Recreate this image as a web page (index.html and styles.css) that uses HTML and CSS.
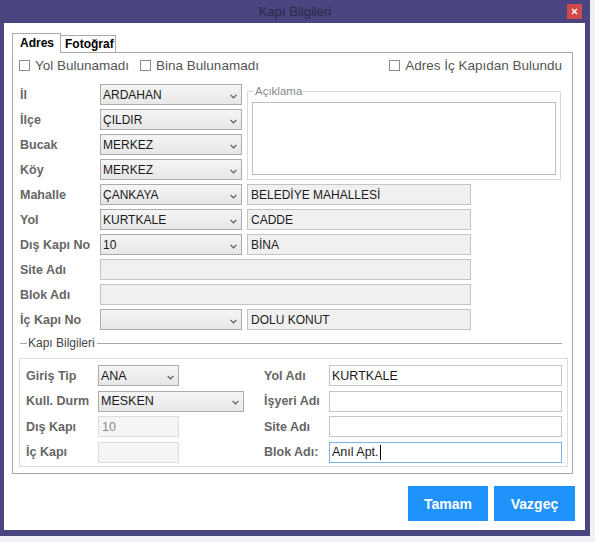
FILE: index.html
```html
<!DOCTYPE html>
<html lang="tr">
<head>
<meta charset="utf-8">
<title>Kapı Bilgileri</title>
<link rel="stylesheet" href="styles.css">
</head>
<body>
<div class="window">
  <div class="titlebar">
    <span></span>
    <span class="title">Kapı Bilgileri</span>
    <span class="close"><svg width="7" height="7" viewBox="0 0 7 7"><path d="M1 1 L6 6 M6 1 L1 6" stroke="#fff" stroke-width="1.4"/></svg></span>
  </div>
  <div class="client">
    <div class="tabs">
      <div class="tab active">Adres</div>
      <div class="tab other">Fotoğraf</div>
    </div>
    <div class="panel">
      <div class="checks">
        <div class="check"><span class="box"></span>Yol Bulunamadı</div>
        <div class="check"><span class="box"></span>Bina Bulunamadı</div>
        <div class="check push"><span class="box"></span>Adres İç Kapıdan Bulundu</div>
      </div>
      <div class="addr">
        <fieldset class="aciklama"><legend>Açıklama</legend><div class="memo"></div></fieldset>
        <div class="lbl">İl</div>
        <div class="combo"><span>ARDAHAN</span><svg class="chev" width="7" height="5" viewBox="0 0 7 5"><path d="M0.6 0.8 L3.5 3.8 L6.4 0.8" fill="none" stroke="#555" stroke-width="1.2"/></svg></div>
        <div class="lbl">İlçe</div>
        <div class="combo"><span>ÇILDIR</span><svg class="chev" width="7" height="5" viewBox="0 0 7 5"><path d="M0.6 0.8 L3.5 3.8 L6.4 0.8" fill="none" stroke="#555" stroke-width="1.2"/></svg></div>
        <div class="lbl">Bucak</div>
        <div class="combo"><span>MERKEZ</span><svg class="chev" width="7" height="5" viewBox="0 0 7 5"><path d="M0.6 0.8 L3.5 3.8 L6.4 0.8" fill="none" stroke="#555" stroke-width="1.2"/></svg></div>
        <div class="lbl">Köy</div>
        <div class="combo"><span>MERKEZ</span><svg class="chev" width="7" height="5" viewBox="0 0 7 5"><path d="M0.6 0.8 L3.5 3.8 L6.4 0.8" fill="none" stroke="#555" stroke-width="1.2"/></svg></div>
        <div class="lbl">Mahalle</div>
        <div class="combo"><span>ÇANKAYA</span><svg class="chev" width="7" height="5" viewBox="0 0 7 5"><path d="M0.6 0.8 L3.5 3.8 L6.4 0.8" fill="none" stroke="#555" stroke-width="1.2"/></svg></div>
        <div class="tb">BELEDİYE MAHALLESİ</div>
        <div class="lbl">Yol</div>
        <div class="combo"><span>KURTKALE</span><svg class="chev" width="7" height="5" viewBox="0 0 7 5"><path d="M0.6 0.8 L3.5 3.8 L6.4 0.8" fill="none" stroke="#555" stroke-width="1.2"/></svg></div>
        <div class="tb">CADDE</div>
        <div class="lbl">Dış Kapı No</div>
        <div class="combo"><span>10</span><svg class="chev" width="7" height="5" viewBox="0 0 7 5"><path d="M0.6 0.8 L3.5 3.8 L6.4 0.8" fill="none" stroke="#555" stroke-width="1.2"/></svg></div>
        <div class="tb">BİNA</div>
        <div class="lbl">Site Adı</div>
        <div class="tb wide"></div>
        <div class="lbl">Blok Adı</div>
        <div class="tb wide"></div>
        <div class="lbl">İç Kapı No</div>
        <div class="combo"><span></span><svg class="chev" width="7" height="5" viewBox="0 0 7 5"><path d="M0.6 0.8 L3.5 3.8 L6.4 0.8" fill="none" stroke="#555" stroke-width="1.2"/></svg></div>
        <div class="tb">DOLU KONUT</div>
      </div>
      <div class="sep">Kapı Bilgileri</div>
      <div class="kapi">
        <div class="klbl c1">Giriş Tip</div>
        <div class="combo kcombo small"><span>ANA</span><svg class="chev" width="7" height="5" viewBox="0 0 7 5"><path d="M0.6 0.8 L3.5 3.8 L6.4 0.8" fill="none" stroke="#555" stroke-width="1.2"/></svg></div>
        <div class="klbl c4">Yol Adı</div>
        <div class="kt">KURTKALE</div>
        <div class="klbl c1">Kull. Durm</div>
        <div class="combo kcombo"><span>MESKEN</span><svg class="chev" width="7" height="5" viewBox="0 0 7 5"><path d="M0.6 0.8 L3.5 3.8 L6.4 0.8" fill="none" stroke="#555" stroke-width="1.2"/></svg></div>
        <div class="klbl c4">İşyeri Adı</div>
        <div class="kt"></div>
        <div class="klbl c1">Dış Kapı</div>
        <div class="kd">10</div>
        <div class="klbl c4">Site Adı</div>
        <div class="kt"></div>
        <div class="klbl c1">İç Kapı</div>
        <div class="kd"></div>
        <div class="klbl c4">Blok Adı:</div>
        <div class="kt focus">Anıl Apt.<span class="caret"></span></div>
      </div>
    </div>
    <div class="actions">
      <div class="btn">Tamam</div>
      <div class="btn wide">Vazgeç</div>
    </div>
  </div>
</div>
</body>
</html>
```
FILE: styles.css
```css
* { box-sizing: border-box; }

body {
  margin: 0;
  background: #f1f0f5;
  font-family: "Liberation Sans", Arial, sans-serif;
}

.window {
  width: 590px;
  height: 536px;
  background: #4a4480;
  display: flex;
  flex-direction: column;
}

.titlebar {
  height: 23px;
  flex: none;
  display: grid;
  grid-template-columns: 1fr auto 1fr;
  align-items: center;
}

.title {
  font-size: 13px;
  color: #2c2a44;
}

.close {
  justify-self: end;
  margin-right: 8px;
  width: 15px;
  height: 15px;
  background: #cf4b4b;
  display: flex;
  align-items: center;
  justify-content: center;
}

.client {
  flex: 1;
  margin: 0 5px 6px 4px;
  background: #fff;
  padding: 10px 12px 0 8px;
  display: flex;
  flex-direction: column;
}

.tabs {
  display: flex;
  align-items: flex-end;
  height: 20px;
  margin-bottom: -1px;
  position: relative;
  z-index: 1;
}

.tab {
  font-size: 12px;
  font-weight: bold;
  color: #000;
  border: 1px solid #aaa;
  border-bottom: none;
  background: #fff;
}

.tab.active {
  height: 20px;
  line-height: 19px;
  padding: 0 6px 0 7px;
}

.tab.other {
  height: 17px;
  line-height: 16px;
  margin-bottom: 1px;
  border-left: none;
  padding: 0 1px 0 4px;
}

.panel {
  border: 1px solid #a8a8a8;
  height: 422px;
  display: flex;
  flex-direction: column;
  padding-top: 1px;
}

.checks {
  height: 22px;
  display: flex;
  align-items: center;
  padding: 0 10px 0 6px;
}

.check {
  display: flex;
  align-items: center;
  gap: 5px;
  font-size: 13.5px;
  color: #555;
  margin-right: 11px;
}

.check.push {
  margin-left: auto;
  margin-right: 0;
}

.box {
  width: 11px;
  height: 11px;
  border: 1px solid #8c8c8c;
  background: #fff;
}

.addr {
  margin-top: 8px;
  padding-left: 7px;
  display: grid;
  grid-template-columns: 80px 147px 224px 90px;
  grid-auto-rows: 21px;
  row-gap: 4px;
}

.lbl {
  grid-column: 1;
  align-self: center;
  font-size: 12.5px;
  font-weight: bold;
  color: #666;
}

.combo {
  grid-column: 2;
  width: 142px;
  border: 1px solid #acacac;
  background: linear-gradient(#f5f5f5, #e7e7e7);
  display: flex;
  align-items: center;
  justify-content: space-between;
  padding: 0 4px 0 2px;
  font-size: 12px;
  color: #1a1a1a;
}

.chev {
  margin-top: 3px;
}

.tb {
  grid-column: 3;
  border: 1px solid #c4c4c4;
  background: #f0f0f0;
  display: flex;
  align-items: center;
  padding-left: 3px;
  font-size: 12px;
  color: #1a1a1a;
}

.tb.wide {
  grid-column: 2 / 4;
}

.aciklama {
  grid-column: 3 / 5;
  grid-row: 1 / 5;
  margin: 0;
  min-width: 0;
  padding: 0 4px 4px 4px;
  border: 1px solid #dadada;
}

.aciklama legend {
  font-size: 11.5px;
  line-height: 14px;
  color: #888;
  padding: 0 1px;
  margin-left: 2px;
}

.memo {
  margin-top: 4px;
  height: 73px;
  border: 1px solid #bdbdbd;
  background: #fff;
}

.sep {
  margin: 6px 10px 0 7px;
  height: 14px;
  display: flex;
  align-items: center;
  font-size: 12px;
  color: #444;
}

.sep::before {
  content: "";
  width: 7px;
  border-top: 1px solid #a8a8a8;
  margin-right: 1px;
}

.sep::after {
  content: "";
  flex: 1;
  border-top: 1px solid #a8a8a8;
  margin-left: 2px;
}

.kapi {
  margin: 8px 4px 0 6px;
  height: 109px;
  border: 1px solid #dcdcdc;
  padding: 6px 0 0 6px;
  display: grid;
  grid-template-columns: 72px 146px 20px 65px 233px;
  grid-auto-rows: 21px;
  row-gap: 4.6px;
}

.klbl {
  align-self: center;
  font-size: 12.5px;
  font-weight: bold;
  color: #666;
}

.klbl.c1 { grid-column: 1; }
.klbl.c4 { grid-column: 4; }

.kcombo {
  width: 146px;
  font-size: 12.5px;
}

.kcombo.small {
  width: 81px;
}

.kd {
  grid-column: 2;
  width: 81px;
  border: 1px solid #dedede;
  background: #f5f5f5;
  display: flex;
  align-items: center;
  padding-left: 3px;
  font-size: 12.5px;
  color: #8a8a8a;
}

.kt {
  grid-column: 5;
  border: 1px solid #c6c6c6;
  background: #fff;
  display: flex;
  align-items: center;
  padding-left: 2px;
  font-size: 12.5px;
  color: #1a1a1a;
}

.kt.focus {
  border-color: #7fb4e8;
}

.caret {
  width: 1px;
  height: 15px;
  background: #000;
  margin-left: 1px;
}

.actions {
  display: flex;
  justify-content: flex-end;
  gap: 6px;
  margin-top: 12px;
  margin-right: -2px;
}

.btn {
  width: 80px;
  height: 35px;
  background: #1f92fc;
  color: #fff;
  font-size: 14px;
  font-weight: bold;
  display: flex;
  align-items: center;
  justify-content: center;
}

.btn.wide {
  width: 81px;
}
```
